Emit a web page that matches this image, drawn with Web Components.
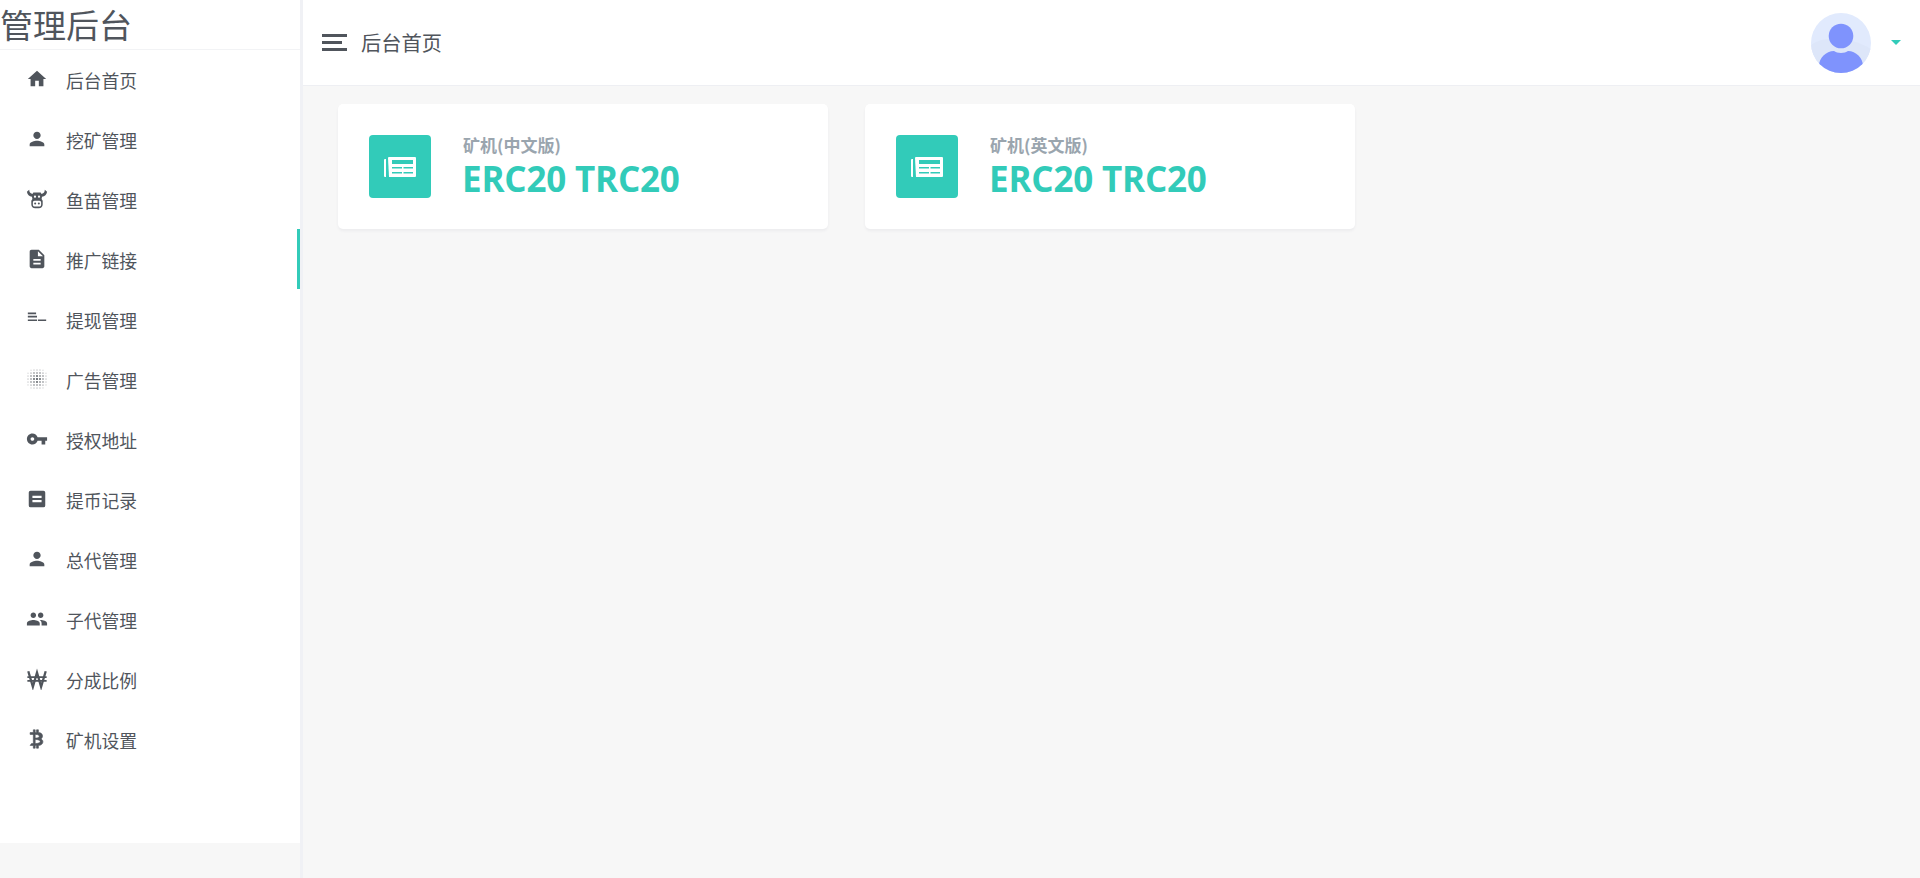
<!DOCTYPE html>
<html lang="zh">
<head>
<meta charset="utf-8">
<title>管理后台</title>
<style>
    html, body { margin: 0; height: 100%; }
    body {
        background: #f7f7f7;
        color: #50555c;
        font-family: "Noto Sans CJK SC", "Open Sans", sans-serif;
    }
</style>
</head>
<body>
<admin-layout>
    <side-bar slot="side" heading="管理后台">
        <nav-item icon="home">后台首页</nav-item>
        <nav-item icon="person">挖矿管理</nav-item>
        <nav-item icon="cow">鱼苗管理</nav-item>
        <nav-item icon="file" active>推广链接</nav-item>
        <nav-item icon="sort">提现管理</nav-item>
        <nav-item icon="blur">广告管理</nav-item>
        <nav-item icon="key">授权地址</nav-item>
        <nav-item icon="box">提币记录</nav-item>
        <nav-item icon="person">总代管理</nav-item>
        <nav-item icon="group">子代管理</nav-item>
        <nav-item icon="krw">分成比例</nav-item>
        <nav-item icon="btc">矿机设置</nav-item>
    </side-bar>
    <top-bar slot="top" heading="后台首页"></top-bar>
    <stat-card label="矿机(中文版)" value="ERC20 TRC20"></stat-card>
    <stat-card label="矿机(英文版)" value="ERC20 TRC20"></stat-card>
</admin-layout>

<script>
// icon set, 24x24 viewBox
const ICONS = {
    home: '<path d="M10 20v-6h4v6h5v-8h3L12 3 2 12h3v8z"/>',
    person: '<path d="M12 12c2.21 0 4-1.79 4-4s-1.79-4-4-4-4 1.79-4 4 1.79 4 4 4zm0 2c-2.67 0-8 1.34-8 4v2h16v-2c0-2.66-5.33-4-8-4z"/>',
    cow: '<path d="M3.500 2C3.500 4.500 4.500 6 7 6.500L8 5h8l1 1.500C19.500 6 20.500 4.500 20.500 2L23 4c-.5 3-2.500 5-5.500 5.500l-.5 2.500 1.200 2V18c0 2.500-1.800 4-4.200 4h-4C7.600 22 5.800 20.500 5.800 18v-4L7 12l-.5-2.500C3.500 9 1.500 7 1 4z"/><path fill="#fff" d="M9.500 14h5c1.300 0 2 .8 2 1.800v2.400c0 1.200-.8 2-2 2h-5c-1.200 0-2-.8-2-2v-2.400c0-1 .7-1.800 2-1.800z"/><circle cx="9.800" cy="9.500" r="1.200" fill="#fff"/><circle cx="14.200" cy="9.500" r="1.200" fill="#fff"/><circle cx="10" cy="17" r="1.100"/><circle cx="14" cy="17" r="1.100"/>',
    file: '<path d="M14 2H6c-1.100 0-1.990.9-1.990 2L4 20c0 1.100.89 2 1.990 2H18c1.100 0 2-.9 2-2V8l-6-6zm2 16H8v-2h8v2zm0-4H8v-2h8v2zm-3-5V3.500L18.500 9H13z"/>',
    sort: '<path d="M2 5h9v1.800H2zM2 8.500h10v1.800H2zM2 12.500h10v1.800H2zM13 12.500h9v1.800h-9z"/>',
    blur: '',
    key: '<path d="M12.650 10C11.830 7.670 9.610 6 7 6c-3.310 0-6 2.690-6 6s2.690 6 6 6c2.610 0 4.830-1.670 5.650-4H17v4h4v-4h2v-4H12.650zM7 14c-1.100 0-2-.9-2-2s.9-2 2-2 2 .9 2 2-.9 2-2 2z"/>',
    box: '<path fill-rule="evenodd" d="M5 3h14a2 2 0 0 1 2 2v14a2 2 0 0 1-2 2H5a2 2 0 0 1-2-2V5a2 2 0 0 1 2-2zm2 5.500v2.500h10V8.500zm0 4.500v2.500h10V13z"/>',
    group: '<path d="M16 11c1.660 0 2.990-1.340 2.990-3S17.660 5 16 5c-1.660 0-3 1.340-3 3s1.340 3 3 3zm-8 0c1.660 0 2.990-1.340 2.990-3S9.660 5 8 5C6.340 5 5 6.340 5 8s1.340 3 3 3zm0 2c-2.330 0-7 1.170-7 3.500V19h14v-2.500c0-2.330-4.670-3.500-7-3.500zm8 0c-.29 0-.62.02-.97.05 1.160.84 1.970 1.970 1.970 3.450V19h6v-2.500c0-2.330-4.670-3.500-7-3.500z"/>',
    krw: '<path d="M2.500 3.500 7.500 20.500 12 5 16.500 20.500 21.500 3.500" fill="none" stroke="currentColor" stroke-width="2.500"/><path d="M1.500 10h21M1.500 14h21" fill="none" stroke="currentColor" stroke-width="1.800"/>',
    btc: '<path stroke="currentColor" stroke-width=".7" d="M4.500 5H8V2h2v3h1.500V2h2v3c5.500 0 5.500 6 2.500 7 4 1 3 7-2.500 7v3h-2v-3H10v3H8v-3H4.500L6 17h1c.55 0 1-.45 1-1V8c0-.55-.45-1-1-1H4.500V5M10 7v4s4.500.25 4.500-2S10 7 10 7m0 5.500V17s5.500 0 5.500-2.250S10 12.500 10 12.500z"/>'
};

// halftone dots for the blur icon
(function () {
    let dots = '';
    for (let y = 0; y < 7; y++) {
        for (let x = 0; x < 7; x++) {
            const d = Math.hypot(x - 3, y - 3);
            if (d > 3.7) continue;
            dots += `<circle cx="${(12 + (x - 3) * 3.27).toFixed(2)}" cy="${(12 + (y - 3) * 3.27).toFixed(2)}" r="${(1.2 - d * 0.22).toFixed(2)}"/>`;
        }
    }
    ICONS.blur = dots;
})();

class AdIcon extends HTMLElement {
    connectedCallback() {
        const size = this.getAttribute('size') || 22;
        this.attachShadow({ mode: 'open' }).innerHTML = `
            <style>
                :host { display: block; width: ${size}px; height: ${size}px; }
                svg { display: block; width: 100%; height: 100%; fill: currentColor; }
            </style>
            <svg viewBox="0 0 24 24">${ICONS[this.getAttribute('name')] || ''}</svg>
        `;
    }
}

class NavItem extends HTMLElement {
    connectedCallback() {
        this.attachShadow({ mode: 'open' }).innerHTML = `
            <style>
                :host {
                    display: flex;
                    align-items: center;
                    height: 60px;
                    box-sizing: border-box;
                    padding: 2px 0 0 26px;
                    font-size: 17.8px;
                    color: #50555c;
                }
                :host([active]) { border-right: 3px solid #32cbb9; }
                ad-icon { margin-right: 18px; position: relative; top: -1px; }
            </style>
            <ad-icon name="${this.getAttribute('icon')}"></ad-icon>
            <slot></slot>
        `;
    }
}

class SideBar extends HTMLElement {
    connectedCallback() {
        this.attachShadow({ mode: 'open' }).innerHTML = `
            <style>
                :host {
                    display: block;
                    width: 300px;
                    height: 843px;
                    background: #fff;
                }
                .brand {
                    height: 49px;
                    box-shadow: 0 1px 0 #f2f3f5;
                    font-size: 33px;
                    line-height: 49px;
                    color: #50555c;
                    white-space: nowrap;
                }
            </style>
            <div class="brand">${this.getAttribute('heading')}</div>
            <slot></slot>
        `;
    }
}

class TopBar extends HTMLElement {
    connectedCallback() {
        this.attachShadow({ mode: 'open' }).innerHTML = `
            <style>
                :host {
                    display: flex;
                    align-items: center;
                    height: 85px;
                    padding: 0 19px;
                    background: #fff;
                    border-bottom: 1px solid #eeeff3;
                    box-sizing: content-box;
                }
                .menu { display: flex; flex-direction: column; gap: 4px; width: 25px; margin-right: 14px; }
                .menu i { display: block; height: 3px; background: #50555c; }
                .menu i:nth-child(2) { width: 20px; }
                .title { font-size: 20.25px; color: #50555c; flex: 1; }
                svg.avatar { width: 60px; height: 60px; display: block; margin-top: 1px; }
                .caret {
                    margin-left: 20px;
                    width: 0; height: 0;
                    border: 5px solid transparent;
                    border-top-color: #32cbb9;
                    border-bottom: 0;
                }
            </style>
            <div class="menu"><i></i><i></i><i></i></div>
            <div class="title">${this.getAttribute('heading')}</div>
            <svg class="avatar" viewBox="0 0 60 60">
                <defs><clipPath id="c"><circle cx="30" cy="30" r="30"/></clipPath></defs>
                <g clip-path="url(#c)">
                    <rect width="60" height="60" fill="#e1eafd"/>
                    <path d="M0 32C14 22 40 24 60 36V60H0z" fill="#dde6f9"/>
                    <circle cx="30" cy="23" r="12.300" fill="#7f93fd"/>
                    <path d="M8 60v-7C8 45 15 38 23 38c3 2.500 11 2.500 14 0 8 0 15 7 15 15v7z" fill="#7f93fd"/>
                </g>
            </svg>
            <div class="caret"></div>
        `;
    }
}

class StatCard extends HTMLElement {
    connectedCallback() {
        this.attachShadow({ mode: 'open' }).innerHTML = `
            <style>
                :host {
                    display: flex;
                    align-items: center;
                    width: 490px;
                    height: 125px;
                    box-sizing: border-box;
                    padding-left: 31px;
                    background: #fff;
                    border-radius: 5px;
                    box-shadow: 0 2px 3px rgba(60, 70, 110, .06);
                }
                .tile {
                    width: 62px;
                    height: 63px;
                    margin-right: 32px;
                    border-radius: 4px;
                    background: #32cbb9;
                    display: flex;
                    align-items: center;
                    justify-content: center;
                    flex: none;
                }
                svg { width: 32px; height: 20px; display: block; }
                .text { margin-top: 3px; }
                .label {
                    font-size: 17px;
                    font-weight: 700;
                    line-height: 22px;
                    color: #9aa5ae;
                }
                .value {
                    font-family: "Open Sans", sans-serif;
                    font-size: 35px;
                    font-weight: 700;
                    letter-spacing: -.2px;
                    line-height: 46px;
                    margin-left: -1px;
                    color: #32cbb9;
                    white-space: nowrap;
                }
            </style>
            <div class="tile">
                <svg viewBox="0 0 32 20">
                    <path fill="#fff" d="M4 1a1 1 0 0 1 1-1h26a1 1 0 0 1 1 1v18a1 1 0 0 1-1 1H5z"/>
                    <path fill="#fff" d="M0 3a1 1 0 0 1 1-1h1v18H1a1 1 0 0 1-1-1z"/>
                    <path fill="#32cbb9" d="M8 3h21v4H8zM8 10h10v1.500H8zM19.500 10h9.500v1.500h-9.500zM8 15h10v1.500H8zM19.500 15h9.500v1.500h-9.500z"/>
                </svg>
            </div>
            <div class="text">
                <div class="label">${this.getAttribute('label')}</div>
                <div class="value">${this.getAttribute('value')}</div>
            </div>
        `;
    }
}

class AdminLayout extends HTMLElement {
    connectedCallback() {
        this.attachShadow({ mode: 'open' }).innerHTML = `
            <style>
                :host {
                    display: grid;
                    grid-template-columns: 300px 1fr;
                    height: 878px;
                    overflow: hidden;
                }
                .main { border-left: 3px solid #f0f1f5; }
                .cards {
                    display: flex;
                    gap: 37px;
                    padding: 18px 35px;
                }
            </style>
            <div class="aside"><slot name="side"></slot></div>
            <div class="main">
                <slot name="top"></slot>
                <div class="cards"><slot></slot></div>
            </div>
        `;
    }
}

customElements.define('ad-icon', AdIcon);
customElements.define('nav-item', NavItem);
customElements.define('side-bar', SideBar);
customElements.define('top-bar', TopBar);
customElements.define('stat-card', StatCard);
customElements.define('admin-layout', AdminLayout);
</script>
</body>
</html>
